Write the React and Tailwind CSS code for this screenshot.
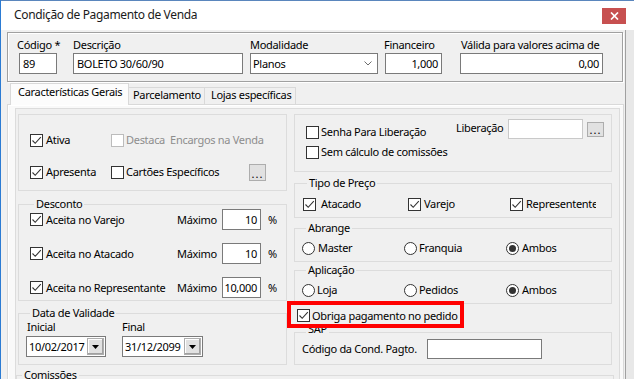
import React from 'react';

const Check = ({ checked = false, disabled = false }) => (
  <span
    className={`w-[13px] h-[13px] shrink-0 border bg-white flex items-center justify-center ${
      disabled ? 'border-[#bcbcbc]' : 'border-[#333333]'
    }`}
  >
    {checked && (
      <svg width="11" height="11" viewBox="0 0 11 11">
        <path d="M1.5 5.5 L4.2 8.3 L9.8 2.2" fill="none" stroke="#333333" strokeWidth="1.1" />
      </svg>
    )}
  </span>
);

const Radio = ({ checked = false }) => (
  <span className="w-[13px] h-[13px] shrink-0 rounded-full border border-[#333333] bg-white flex items-center justify-center">
    {checked && <span className="w-[7px] h-[7px] rounded-full bg-[#333333]" />}
  </span>
);

const Dots = ({ className = '' }) => (
  <div
    className={`w-[17px] shrink-0 border border-[#adadad] bg-[#e1e1e1] flex items-end justify-center text-[11px] leading-[10px] tracking-[1px] pb-[1px] ${className}`}
  >
    ...
  </div>
);

const Field = ({ value = '', className = '', right = false }) => (
  <div
    className={`shrink-0 border bg-white flex items-center overflow-hidden whitespace-nowrap px-[3px] ${
      right ? 'justify-end' : 'justify-start'
    } ${className}`}
  >
    {value}
  </div>
);

const DatePick = ({ value, className = '' }) => (
  <div className={`h-[21px] shrink-0 border border-[#7a7a7a] bg-white flex items-center pl-[2px] pr-[1px] ${className}`}>
    <span className="flex-1">{value}</span>
    <div className="w-[17px] h-[17px] bg-[#e1e1e1] border border-[#adadad] shadow-[inset_-1px_-1px_0_#a0a0a0,inset_1px_1px_0_#ffffff] flex items-center justify-center">
      <svg width="7" height="4" viewBox="0 0 7 4">
        <path d="M0 0 H7 L3.5 4 Z" fill="#000000" />
      </svg>
    </div>
  </div>
);

const Box = ({ title, className = '', legendClass = 'ml-[4px]', children }) => (
  <fieldset className={`border border-[#dcdcdc] min-w-0 ${className}`}>
    {title && <legend className={`px-[2px] leading-[14px] ${legendClass}`}>{title}</legend>}
    {children}
  </fieldset>
);

const Labeled = ({ children, label, gap = 'gap-[3px]', disabled = false }) => (
  <div className={`flex items-center ${gap}`}>
    {children}
    <span className={`whitespace-pre ${disabled ? 'text-[#8d8d8d]' : ''}`}>{label}</span>
  </div>
);

export default function App() {
  const descontos = [
    { label: 'Aceita no Varejo', value: '10' },
    { label: 'Aceita no Atacado', value: '10' },
    { label: 'Aceita no Representante', value: '10,000' },
  ];

  return (
    <div className="w-[634px] h-[379px] overflow-hidden bg-[#f0f0f0] border-l border-[#2b7bd3] font-['Noto_Sans',sans-serif] text-[11px] leading-[14px] tracking-[-0.3px] text-black flex flex-col">
      {/* Title bar */}
      <div className="h-[30px] shrink-0 bg-white border-t border-[#5a86bd] flex items-start justify-between">
        <span className="ml-[13px] mt-[7px] text-[12px] tracking-[-0.35px] text-[#1a1a1a]">Condição de Pagamento de Venda</span>
        <div className="mt-[7px] mr-[8px] w-[24px] h-[16px] bg-[#c75050] flex items-center justify-center">
          <svg width="9" height="8" viewBox="0 0 9 8">
            <path d="M1 0.5 L8 7.5 M8 0.5 L1 7.5" stroke="#ffffff" strokeWidth="1.7" />
          </svg>
        </div>
      </div>

      <div className="flex-1 flex min-h-0">
        <div className="w-[624px] shrink-0 flex flex-col">
          {/* Header panel */}
          <div className="mt-[2px] ml-[6px] w-[616px] h-[50px] shrink-0 border border-[#a0a0a0] shadow-[inset_1px_1px_0_#ffffff,1px_1px_0_#ffffff] flex items-start pt-[4px] pl-[11px] leading-[15px]">
            <div className="flex flex-col w-[38px]">
              <span className="-ml-[2px] whitespace-nowrap">Código *</span>
              <Field value="89" className="mt-[1px] w-[38px] h-[21px] border-[#7a7a7a]" />
            </div>
            <div className="flex flex-col ml-[16px]">
              <span>Descrição</span>
              <Field value="BOLETO 30/60/90" className="mt-[1px] w-[170px] h-[21px] border-[#7a7a7a]" />
            </div>
            <div className="flex flex-col ml-[7px]">
              <span>Modalidade</span>
              <div className="mt-[1px] w-[128px] h-[21px] border border-[#7a7a7a] bg-white flex items-center justify-between pl-[2px] pr-[5px]">
                <span>Planos</span>
                <svg width="8" height="5" viewBox="0 0 8 5">
                  <path d="M0.5 0.5 L4 4 L7.5 0.5" fill="none" stroke="#6d6d6d" strokeWidth="1" />
                </svg>
              </div>
            </div>
            <div className="flex flex-col ml-[7px]">
              <span className="-ml-[1px]">Financeiro</span>
              <Field value="1,000" right className="mt-[1px] w-[57px] h-[21px] border-[#7a7a7a]" />
            </div>
            <div className="flex flex-col ml-[18px]">
              <span className="ml-[1px] whitespace-nowrap">Válida para valores acima de</span>
              <Field value="0,00" right className="mt-[1px] w-[143px] h-[21px] border-[#7a7a7a]" />
            </div>
          </div>

          {/* Tabs */}
          <div className="mt-[1px] ml-[9px] flex items-end shrink-0">
            <div className="relative z-10 w-[119px] h-[22px] -mb-[1px] bg-[#fcfcfc] border border-b-0 border-[#d9d9d9] pl-[7px] pt-[1px] whitespace-nowrap">
              Características Gerais
            </div>
            <div className="w-[76px] h-[17px] bg-[#f0f0f0] border border-l-0 border-b-0 border-[#d9d9d9] pl-[4px] whitespace-nowrap">
              Parcelamento
            </div>
            <div className="w-[91px] h-[17px] bg-[#f0f0f0] border border-l-0 border-b-0 border-[#d9d9d9] pl-[6px] whitespace-nowrap">
              Lojas específicas
            </div>
          </div>

          {/* Tab page */}
          <div className="ml-[6px] w-[617px] flex-1 border border-b-0 border-[#d9d9d9] bg-[#f9f9f9] shadow-[inset_1px_1px_0_#ffffff]">
            <div className="mt-[3px] ml-[7px] w-[605px] h-full border border-b-0 border-[#dcdcdc] bg-[#f0f0f0] pt-[5px] pl-[2px]">
              <div className="flex gap-[7px]">
                {/* Left column */}
                <div className="w-[269px] flex flex-col">
                  <div className="h-[77px] border border-[#dcdcdc] pt-[15px] pl-[11px] flex flex-col gap-[12px]">
                    <div className="h-[20px] flex items-center">
                      <div className="w-[81px]">
                        <Labeled label="Ativa">
                          <Check checked />
                        </Labeled>
                      </div>
                      <Labeled label="Destaca  Encargos na Venda" gap="gap-[2px]" disabled>
                        <Check disabled />
                      </Labeled>
                    </div>
                    <div className="h-[20px] flex items-center">
                      <div className="w-[81px]">
                        <Labeled label="Apresenta">
                          <Check checked />
                        </Labeled>
                      </div>
                      <div className="w-[138px]">
                        <Labeled label="Cartões Específicos" gap="gap-[2px]">
                          <Check />
                        </Labeled>
                      </div>
                      <Dots className="h-[17px]" />
                    </div>
                  </div>

                  <Box title="Desconto" className="mt-[6px] pl-[11px] pb-[2px]">
                    <div className="-mt-[2px] flex flex-col gap-[13px]">
                      {descontos.map((d) => (
                        <div key={d.label} className="h-[21px] flex items-center">
                          <div className="w-[147px]">
                            <Labeled label={d.label}>
                              <Check checked />
                            </Labeled>
                          </div>
                          <span className="w-[45px]">Máximo</span>
                          <Field value={d.value} right className="w-[39px] h-[21px] px-[2px] border-[#7a7a7a]" />
                          <span className="ml-[7px]">%</span>
                        </div>
                      ))}
                    </div>
                  </Box>

                  <Box title="Data de Validade" className="mt-[5px] pl-[7px] pb-[7px]">
                    <div className="flex gap-[16px]">
                      <div className="flex flex-col gap-[2px]">
                        <span className="ml-[1px]">Inicial</span>
                        <DatePick value="10/02/2017" className="w-[80px]" />
                      </div>
                      <div className="flex flex-col gap-[2px]">
                        <span>Final</span>
                        <DatePick value="31/12/2099" className="w-[81px]" />
                      </div>
                    </div>
                  </Box>
                </div>

                {/* Right column */}
                <div className="w-[318px] flex flex-col">
                  <div className="h-[58px] border border-[#dcdcdc] flex items-start">
                    <div className="mt-[7px] ml-[11px] flex flex-col">
                      <div className="h-[20px] flex items-center">
                        <Labeled label="Senha Para Liberação" gap="gap-[2px]">
                          <Check />
                        </Labeled>
                      </div>
                      <div className="h-[20px] flex items-center">
                        <Labeled label="Sem cálculo de comissões" gap="gap-[2px]">
                          <Check />
                        </Labeled>
                      </div>
                    </div>
                    <div className="ml-auto mr-[7px] mt-[4px] h-[20px] flex items-center">
                      <span className="w-[52px] -mt-[2px]">Liberação</span>
                      <Field className="w-[75px] h-[20px] border-[#c9c9c9]" />
                      <Dots className="ml-[4px] h-[15px]" />
                    </div>
                  </div>

                  <Box title="Tipo de Preço" className="mt-[4px] pl-[8px] pb-[3px]">
                    <div className="mt-[4px] h-[20px] flex items-center">
                      <div className="w-[105px]">
                        <Labeled label="Atacado" gap="gap-[5px]">
                          <Check checked />
                        </Labeled>
                      </div>
                      <div className="w-[102px]">
                        <Labeled label="Varejo">
                          <Check checked />
                        </Labeled>
                      </div>
                      <div className="flex items-center gap-[3px]">
                        <Check checked />
                        <span className="w-[70px] overflow-hidden whitespace-nowrap">Representente</span>
                      </div>
                    </div>
                  </Box>

                  <Box title="Abrange" className="mt-[3px] pl-[7px] pb-[3px]">
                    <div className="mt-[3px] h-[20px] flex items-center">
                      <div className="w-[102px]">
                        <Labeled label="Master">
                          <Radio />
                        </Labeled>
                      </div>
                      <div className="w-[102px]">
                        <Labeled label="Franquia" gap="gap-[2px]">
                          <Radio />
                        </Labeled>
                      </div>
                      <Labeled label="Ambos">
                        <Radio checked />
                      </Labeled>
                    </div>
                  </Box>

                  <Box title="Aplicação" className="mt-[1px] pl-[7px] pb-[3px]">
                    <div className="mt-[3px] h-[20px] flex items-center">
                      <div className="w-[102px]">
                        <Labeled label="Loja" gap="gap-[2px]">
                          <Radio />
                        </Labeled>
                      </div>
                      <div className="w-[102px]">
                        <Labeled label="Pedidos" gap="gap-[2px]">
                          <Radio />
                        </Labeled>
                      </div>
                      <Labeled label="Ambos">
                        <Radio checked />
                      </Labeled>
                    </div>
                  </Box>

                  <div className="relative z-10 -mt-[3px] -ml-[7px] w-[177px] h-[27px] border-[4px] border-[#ff0000] pl-[6px] pt-[2px] flex items-center">
                    <Labeled label="Obriga pagamento no pedido" gap="gap-[2px]">
                      <Check checked />
                    </Labeled>
                  </div>

                  <Box title="SAP" className="-mt-[6px] pl-[7px] pb-[5px]" legendClass="ml-[4px] pb-[6px]">
                    <div className="-mt-[3px] h-[20px] flex items-center">
                      <span className="w-[125px] whitespace-nowrap">Código da Cond. Pagto.</span>
                      <Field className="w-[115px] h-[20px] border-[#7a7a7a]" />
                    </div>
                  </Box>
                </div>
              </div>

              <Box title="Comissões" className="mt-[3px] -ml-[2px] w-[598px] h-[40px]" legendClass="ml-[5px]" />
            </div>
          </div>
        </div>

        {/* Right window edge */}
        <div className="flex-1 border-l border-[#a0a0a0] bg-[#e8e8e8]" />
      </div>
    </div>
  );
}
